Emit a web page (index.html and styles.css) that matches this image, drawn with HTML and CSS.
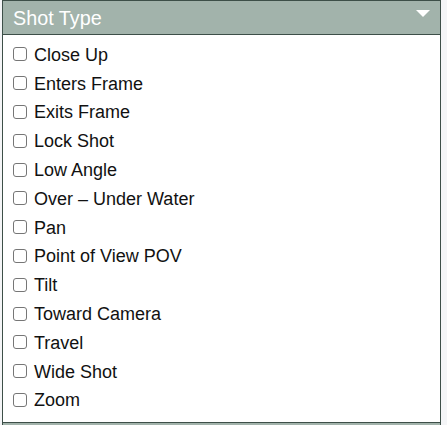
FILE: index.html
```html
<!DOCTYPE html>
<html lang="en">
<head>
<meta charset="utf-8">
<title>Shot Type</title>
<link rel="stylesheet" href="styles.css">
</head>
<body>
<div class="page">
  <section class="panel">
    <header class="panel-head">
      <span class="panel-title">Shot Type</span>
      <span class="caret"></span>
    </header>
    <ul class="options">
      <li><label class="option"><input type="checkbox"><span>Close Up</span></label></li>
      <li><label class="option"><input type="checkbox"><span>Enters Frame</span></label></li>
      <li><label class="option"><input type="checkbox"><span>Exits Frame</span></label></li>
      <li><label class="option"><input type="checkbox"><span>Lock Shot</span></label></li>
      <li><label class="option"><input type="checkbox"><span>Low Angle</span></label></li>
      <li><label class="option"><input type="checkbox"><span>Over – Under Water</span></label></li>
      <li><label class="option"><input type="checkbox"><span>Pan</span></label></li>
      <li><label class="option"><input type="checkbox"><span>Point of View POV</span></label></li>
      <li><label class="option"><input type="checkbox"><span>Tilt</span></label></li>
      <li><label class="option"><input type="checkbox"><span>Toward Camera</span></label></li>
      <li><label class="option"><input type="checkbox"><span>Travel</span></label></li>
      <li><label class="option"><input type="checkbox"><span>Wide Shot</span></label></li>
      <li><label class="option"><input type="checkbox"><span>Zoom</span></label></li>
    </ul>
  </section>
  <section class="panel">
    <header class="panel-head next"></header>
  </section>
</div>
</body>
</html>
```

FILE: styles.css
```css
html, body {
  margin: 0;
  padding: 0;
  background: #f4f5f7;
  height: 100%;
  overflow: hidden;
}

.page {
  margin-left: 2px;
  width: 439px;
  font-family: "Liberation Sans", Arial, sans-serif;
}

.panel {
  border: 1px solid #3d4f48;
  border-bottom: none;
  background: #ffffff;
}

.panel + .panel {
  border-top: 1px solid #3d4f48;
}

.panel-head {
  height: 34px;
  box-sizing: border-box;
  background: #a2b3ab;
  border-bottom: 1px solid #3d4f48;
  display: flex;
  align-items: center;
  justify-content: space-between;
  padding: 1px 10px 0 10px;
}

.panel-head.next {
  border-bottom: none;
}

.panel-title {
  color: #ffffff;
  font-size: 19.8px;
}

.caret {
  width: 0;
  height: 0;
  border-left: 7px solid transparent;
  border-right: 7px solid transparent;
  border-top: 7px solid #ffffff;
  align-self: flex-start;
  margin-top: 8px;
}

.options {
  list-style: none;
  margin: 0;
  padding: 6px 0 6.6px 10px;
}

.option {
  display: flex;
  align-items: center;
  height: 28.8px;
  font-size: 18px;
  color: #111111;
}

.option input {
  appearance: none;
  -webkit-appearance: none;
  box-sizing: border-box;
  margin: 0 7px 2px 0;
  width: 14px;
  height: 14px;
  border: 1px solid #767676;
  border-radius: 3px;
  background: #ffffff;
}
```
